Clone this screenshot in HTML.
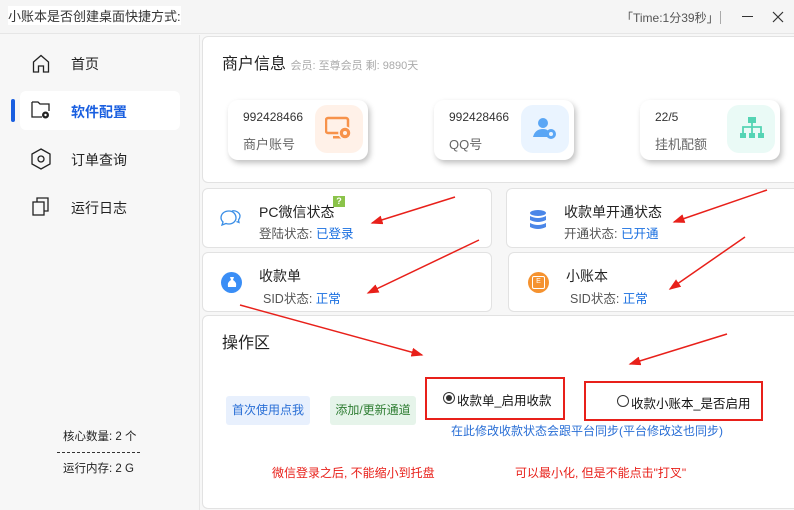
<!DOCTYPE html><html><head><meta charset="utf-8"><style>
*{margin:0;padding:0;box-sizing:border-box}
body{width:794px;height:510px;overflow:hidden;background:#f7f7f7;font-family:"Liberation Sans","Noto Sans CJK SC",sans-serif;position:relative;color:#222}
.a{position:absolute}
.card{position:absolute;background:#fff;border:1px solid #e2e2e2;border-radius:6px}
.info{position:absolute;background:#fff;border-radius:10px;box-shadow:2px 3px 6px rgba(0,0,0,.25);width:140px;height:60px;top:100px}
.info .n{position:absolute;left:15px;top:10px;font-size:12px;color:#333}
.info .l{position:absolute;left:15px;top:34px;font-size:13px;color:#666}
.info .ic{position:absolute;left:87px;top:5px;width:48px;height:48px;border-radius:12px}
.t{font-size:14px;color:#222}
.s{font-size:12.5px;color:#555}
.s b{font-weight:normal;color:#1a6fe0}
</style></head><body>
<div class="a" style="left:0;top:0;width:794px;height:34px;background:#f5f5f5;border-bottom:1px solid #e6e6e6"></div>
<div class="a" style="left:8px;top:6px;font-size:13px;color:#333;background:#fff">小账本是否创建桌面快捷方式:</div>
<div class="a" style="left:621px;top:9px;font-size:12px;color:#555">「Time:1分39秒」</div>
<div class="a" style="left:720px;top:11px;width:1px;height:13px;background:#aaa"></div>
<div class="a" style="left:742px;top:16px;width:11px;height:1px;background:#333"></div>
<svg class="a" style="left:772px;top:11px" width="12" height="12"><path d="M1 1L11 11M11 1L1 11" stroke="#333" stroke-width="1.2"/></svg>
<div class="a" style="left:199px;top:35px;width:1px;height:475px;background:#e6e6e6"></div>
<!-- sidebar -->
<svg class="a" style="left:32px;top:54px" width="18" height="19"><path d="M1.5 8L9 1.5 16.5 8V18H11.5V12H6.5V18H1.5Z" fill="none" stroke="#222" stroke-width="1.3"/></svg>
<div class="a" style="left:71px;top:54px;font-size:14px">首页</div>
<div class="a" style="left:20px;top:91px;width:160px;height:39px;background:#fff;border-radius:6px"></div>
<div class="a" style="left:11px;top:99px;width:4px;height:23px;background:#1a5fe0;border-radius:2px"></div>
<svg class="a" style="left:31px;top:100px" width="20" height="20"><path d="M1 2H7L9 4H18V11M11 17H1V2" fill="none" stroke="#222" stroke-width="1.3"/><circle cx="14.5" cy="15" r="3.5" fill="#222"/><circle cx="14.5" cy="15" r="1.2" fill="#fff"/></svg>
<div class="a" style="left:71px;top:102px;font-size:14px;font-weight:bold;color:#1a5fe0">软件配置</div>
<svg class="a" style="left:31px;top:148px" width="20" height="22"><path d="M10 1L19 6V16L10 21 1 16V6Z" fill="none" stroke="#222" stroke-width="1.3"/><circle cx="10" cy="11" r="3" fill="none" stroke="#222" stroke-width="1.3"/></svg>
<div class="a" style="left:71px;top:150px;font-size:14px">订单查询</div>
<svg class="a" style="left:32px;top:197px" width="18" height="20"><rect x="1" y="5" width="11" height="13" fill="none" stroke="#222" stroke-width="1.3"/><path d="M5 5V1H16V14H12" fill="none" stroke="#222" stroke-width="1.3"/></svg>
<div class="a" style="left:71px;top:198px;font-size:14px">运行日志</div>
<div class="a" style="left:63px;top:428px;font-size:11.5px;color:#222">核心数量: 2 个</div>
<div class="a" style="left:57px;top:452px;width:83px;border-top:1px dashed #333"></div>
<div class="a" style="left:63px;top:460px;font-size:11.5px;color:#222">运行内存: 2 G</div>
<!-- top card -->
<div class="card" style="left:202px;top:36px;width:600px;height:147px"></div>
<div class="a" style="left:222px;top:50px;font-size:16px;color:#222">商户信息 <span style="font-size:11px;color:#aaa">会员: 至尊会员 剩: 9890天</span></div>
<div class="info" style="left:228px"><div class="n">992428466</div><div class="l">商户账号</div><div class="ic" style="background:#fff1e8"><svg style="margin:11px 0 0 10px" width="28" height="26"><rect x="1" y="2" width="22" height="15" rx="2" fill="none" stroke="#f7924a" stroke-width="2.5"/><rect x="8" y="20" width="8" height="2.5" fill="#f7924a"/><circle cx="20" cy="17" r="6" fill="#f7924a" stroke="#fff1e8" stroke-width="1.5"/><circle cx="20" cy="17" r="2" fill="#fff1e8"/></svg></div></div>
<div class="info" style="left:434px"><div class="n">992428466</div><div class="l">QQ号</div><div class="ic" style="background:#eaf4ff"><svg style="margin:12px 0 0 12px" width="26" height="24"><circle cx="10" cy="6" r="5" fill="#5aa6f5"/><path d="M0 20Q2 12 10 12Q14 12 15 14V20Z" fill="#5aa6f5"/><circle cx="18" cy="17" r="5" fill="#5aa6f5"/><circle cx="18" cy="17" r="2" fill="#eaf4ff"/></svg></div></div>
<div class="info" style="left:640px"><div class="n">22/5</div><div class="l">挂机配额</div><div class="ic" style="background:#eafaf6"><svg style="margin:11px 0 0 12px" width="26" height="26"><rect x="9" y="1" width="8" height="6" fill="#55d4b4"/><path d="M13 7V11M4 17V11H22V17M13 11V17" stroke="#55d4b4" stroke-width="1.8" fill="none"/><rect x="1" y="17" width="6" height="5" fill="#55d4b4"/><rect x="10" y="17" width="6" height="5" fill="#55d4b4"/><rect x="19" y="17" width="6" height="5" fill="#55d4b4"/></svg></div></div>
<!-- status cards -->
<div class="card" style="left:202px;top:188px;width:290px;height:60px"></div>
<div class="card" style="left:506px;top:188px;width:300px;height:60px"></div>
<div class="card" style="left:202px;top:252px;width:290px;height:60px"></div>
<div class="card" style="left:508px;top:252px;width:300px;height:60px"></div>
<svg class="a" style="left:220px;top:208px" width="24" height="22"><path d="M9 3C4 3 1 6 1 10C1 12 2 13 3 14L2 17L6 15.5C7 16 8 16 9 16C13 16 16 13 16 10C16 6 13 3 9 3Z" fill="none" stroke="#3a8ee6" stroke-width="1.3"/><path d="M12 3C16 2 20 5 20 8C20 10 19 11 18.5 12L19 14.5L16.5 13.5" fill="none" stroke="#3a8ee6" stroke-width="1.3"/></svg>
<div class="a t" style="left:259px;top:202px">PC微信状态</div>
<div class="a" style="left:333px;top:196px;width:12px;height:11px;background:#8bc34a;color:#fff;font-size:9px;text-align:center;line-height:11px;font-weight:bold">?</div>
<div class="a s" style="left:259px;top:223px">登陆状态: <b>已登录</b></div>
<svg class="a" style="left:528px;top:209px" width="20" height="22"><ellipse cx="10" cy="4" rx="8" ry="3" fill="#4a86e8"/><path d="M2 7Q10 11 18 7V11Q10 15 2 11ZM2 14Q10 18 18 14V18Q10 22 2 18Z" fill="#4a86e8"/></svg>
<div class="a t" style="left:564px;top:202px">收款单开通状态</div>
<div class="a s" style="left:564px;top:223px">开通状态: <b>已开通</b></div>
<div class="a" style="left:221px;top:272px;width:21px;height:21px;border-radius:50%;background:#3a8ef6"></div>
<svg class="a" style="left:226px;top:276px" width="12" height="13"><path d="M4 1H8L7 4Q11 6 10 11H2Q1 6 5 4Z" fill="#fff"/></svg>
<div class="a t" style="left:259px;top:266px">收款单</div>
<div class="a s" style="left:263px;top:288px">SID状态: <b>正常</b></div>
<div class="a" style="left:528px;top:272px;width:21px;height:21px;border-radius:50%;background:#f5922f"></div>
<div class="a" style="left:532px;top:276px;width:13px;height:13px;border:1.5px solid #fff;border-radius:2px;color:#fff;font-size:7px;line-height:10px;text-align:center">E</div>
<div class="a t" style="left:566px;top:266px">小账本</div>
<div class="a s" style="left:570px;top:288px">SID状态: <b>正常</b></div>
<!-- bottom card -->
<div class="card" style="left:202px;top:315px;width:600px;height:194px"></div>
<div class="a" style="left:222px;top:329px;font-size:16px">操作区</div>
<div class="a" style="left:226px;top:396px;width:84px;height:29px;background:#e8f0fd;border-radius:3px;color:#2a6fd6;font-size:12px;text-align:center;line-height:29px">首次使用点我</div>
<div class="a" style="left:330px;top:396px;width:86px;height:29px;background:#e6f4ea;border-radius:3px;color:#2e7d32;font-size:12px;text-align:center;line-height:29px">添加/更新通道</div>
<div class="a" style="left:425px;top:377px;width:140px;height:43px;border:2px solid #e8201a"></div>
<div class="a" style="left:584px;top:381px;width:179px;height:40px;border:2px solid #e8201a"></div>
<div class="a" style="left:443px;top:392px;width:12px;height:12px;border:1px solid #333;border-radius:50%"></div>
<div class="a" style="left:446px;top:395px;width:6px;height:6px;background:#333;border-radius:50%"></div>
<div class="a" style="left:457px;top:390px;font-size:12.5px;color:#111">收款单_启用收款</div>
<div class="a" style="left:617px;top:395px;width:12px;height:12px;border:1px solid #333;border-radius:50%"></div>
<div class="a" style="left:631px;top:393px;font-size:12.5px;color:#111">收款小账本_是否启用</div>
<div class="a" style="left:451px;top:422px;font-size:12px;color:#2a6fd6">在此修改收款状态会跟平台同步(平台修改这也同步)</div>
<div class="a" style="left:272px;top:464px;font-size:12px;color:#e8201a">微信登录之后, 不能缩小到托盘</div>
<div class="a" style="left:515px;top:464px;font-size:12px;color:#e8201a">可以最小化, 但是不能点击"打叉"</div>
<!-- arrows -->
<svg class="a" style="left:0;top:0" width="794" height="510"><defs><marker id="m" markerWidth="8" markerHeight="6" refX="7" refY="3" orient="auto"><path d="M0 0L8 3 0 6Z" fill="#e8201a"/></marker></defs>
<g stroke="#e8201a" stroke-width="1.5" marker-end="url(#m)">
<line x1="455" y1="197" x2="372" y2="223"/>
<line x1="767" y1="190" x2="674" y2="222"/>
<line x1="479" y1="240" x2="368" y2="293"/>
<line x1="745" y1="237" x2="670" y2="289"/>
<line x1="240" y1="305" x2="422" y2="355"/>
<line x1="727" y1="334" x2="630" y2="364"/>
</g></svg>
</body></html>
